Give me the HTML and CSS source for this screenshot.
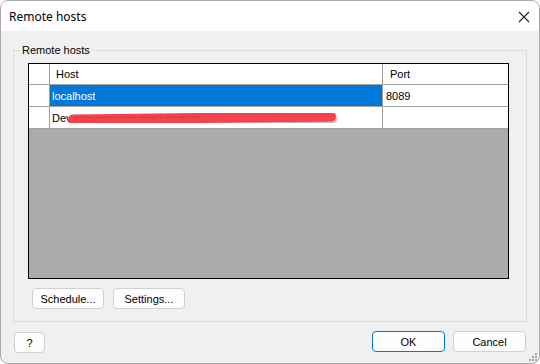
FILE: index.html
```html
<!DOCTYPE html>
<html>
<head>
<meta charset="utf-8">
<link rel="stylesheet" href="styles.css">
</head>
<body>
<div class="window">
  <div class="titlebar">
    <span class="title">Remote hosts</span>
    <svg class="close" width="12" height="12" viewBox="0 0 12 12"><path d="M1 1 L11 11 M11 1 L1 11" stroke="#222" stroke-width="1.1" fill="none"/></svg>
  </div>
  <div class="body">
    <fieldset class="group">
      <legend>Remote hosts</legend>
      <div class="grid">
        <div class="row head">
          <div class="cell rh"></div>
          <div class="cell host">Host</div>
          <div class="cell port">Port</div>
        </div>
        <div class="row">
          <div class="cell rh"></div>
          <div class="cell host sel">localhost</div>
          <div class="cell port">8089</div>
        </div>
        <div class="row">
          <div class="cell rh"></div>
          <div class="cell host">Dev</div>
          <div class="cell port"></div>
        </div>
        <div class="empty"></div>
      </div>
      <div class="group-buttons">
        <button class="btn">Schedule...</button>
        <button class="btn">Settings...</button>
      </div>
    </fieldset>
    <div class="footer">
      <button class="btn help">?</button>
      <div class="spacer"></div>
      <button class="btn ok">OK</button>
      <button class="btn">Cancel</button>
    </div>
  </div>
  <svg class="redact" width="540" height="364" viewBox="0 0 540 364">
    <defs>
      <filter id="sh" x="-5%" y="-100%" width="110%" height="300%">
        <feDropShadow dx="1" dy="2" stdDeviation="1" flood-color="#000" flood-opacity="0.35"/>
      </filter>
    </defs>
    <path d="M73 119.5 Q200 118 331 116.5" stroke="#f6434e" stroke-width="10" stroke-linecap="round" fill="none" filter="url(#sh)"/>
    <path d="M74 117.5 L200 117" stroke="#6a4a4a" stroke-width="1" stroke-dasharray="6 2 3 2" opacity="0.55" fill="none"/>
  </svg>
  <svg class="grip" width="10" height="10" viewBox="0 0 10 10">
    <rect x="7" y="1" width="2" height="2" fill="#a8a8a8"/>
    <rect x="4" y="4" width="2" height="2" fill="#a8a8a8"/>
    <rect x="7" y="4" width="2" height="2" fill="#a8a8a8"/>
    <rect x="1" y="7" width="2" height="2" fill="#a8a8a8"/>
    <rect x="4" y="7" width="2" height="2" fill="#a8a8a8"/>
    <rect x="7" y="7" width="2" height="2" fill="#a8a8a8"/>
  </svg>
</div>
</body>
</html>
```
FILE: styles.css
```css
* { box-sizing: border-box; }
html, body { margin: 0; padding: 0; background: #fff; }
body { font-family: "Liberation Sans", Arial, sans-serif; font-size: 11px; color: #000; }

.window {
  position: relative;
  width: 540px;
  height: 364px;
  border: 1px solid #a9a9a9;
  border-radius: 8px;
  overflow: hidden;
  display: flex;
  flex-direction: column;
  background: #f0f0f0;
}

.titlebar {
  height: 30px;
  flex: none;
  background: #fff;
  display: flex;
  align-items: center;
  padding: 0 9px 0 8px;
}
.title {
  font-family: "Noto Sans", "Segoe UI", sans-serif;
  font-size: 12px;
  flex: 1;
  padding-top: 1px;
}
.close { display: block; margin-top: 2px; }

.body {
  flex: 1;
  padding: 13px 12px 0 12px;
  display: flex;
  flex-direction: column;
}

.group {
  margin: 0;
  padding: 0 0 12px 0;
  border: 1px solid #dcdcdc;
  min-width: 0;
}
.group legend {
  margin-left: 6px;
  padding: 0 2px;
  line-height: 13px;
  font-size: 11px;
}

.grid {
  margin: 6px 17px 0 14px;
  height: 216px;
  border: 1px solid #000;
  background: #ababab;
  display: flex;
  flex-direction: column;
}
.row {
  display: flex;
  height: 22px;
  background: #fff;
  border-bottom: 1px solid #a0a0a0;
  flex: none;
}
.row.head { height: 21px; }
.cell {
  display: flex;
  align-items: center;
  white-space: nowrap;
  overflow: hidden;
}
.rh { width: 21px; border-right: 1px solid #a0a0a0; }
.host { width: 333px; border-right: 1px solid #a0a0a0; padding-left: 2px; }
.port { flex: 1; padding-left: 3px; }
.head .host { padding-left: 6px; }
.head .port { padding-left: 7px; }
.sel { background: #0078d7; color: #fff; }
.empty { flex: 1; }

.group-buttons {
  display: flex;
  gap: 9px;
  margin: 9px 0 0 18px;
}
.btn {
  font-family: "Liberation Sans", Arial, sans-serif;
  font-size: 11px;
  color: #000;
  height: 21px;
  width: 72px;
  padding: 0;
  background: #fdfdfd;
  border: 1px solid #d0d0d0;
  border-radius: 4px;
}
.footer {
  display: flex;
  gap: 8px;
  margin-top: 9px;
  padding: 0 1px;
}
.spacer { flex: 1; }
.help { width: 31px; margin-top: 1px; }
.ok { width: 73px; border-color: #0078d4; }
.footer .btn:last-child { width: 73px; }

.redact {
  position: absolute;
  left: -1px;
  top: -1px;
  pointer-events: none;
}
.grip {
  position: absolute;
  right: 1px;
  bottom: 1px;
}
```
